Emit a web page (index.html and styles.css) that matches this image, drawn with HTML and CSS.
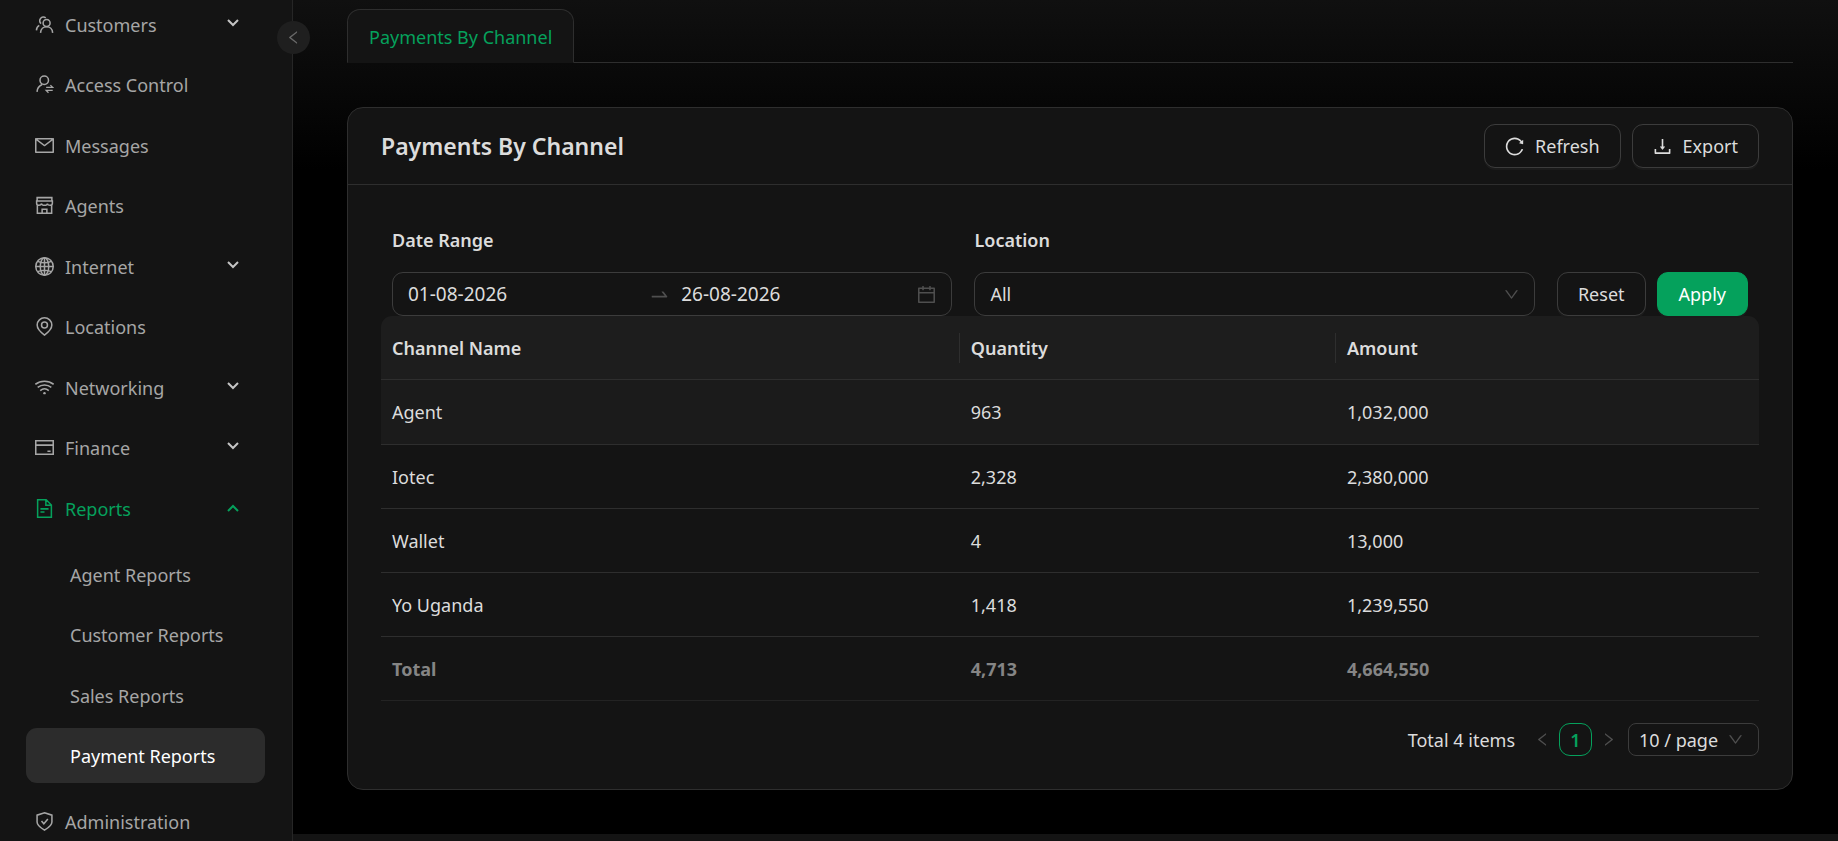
FILE: index.html
```html
<!DOCTYPE html>
<html lang="en">
<head>
<meta charset="utf-8">
<title>Payments By Channel</title>
<link rel="stylesheet" href="styles.css">
</head>
<body>
<svg class="sprite" aria-hidden="true">
  <symbol id="down" viewBox="64 64 896 896"><path d="M884 256h-75c-5.1 0-9.9 2.5-12.9 6.6L512 654.2 227.900 262.600c-3-4.100-7.800-6.600-12.900-6.600h-75c-6.500 0-10.300 7.400-6.500 12.700l352.600 486.100c12.800 17.600 39 17.600 51.700 0l352.600-486.100c3.900-5.300.1-12.700-6.400-12.700z"/></symbol>
  <symbol id="left" viewBox="64 64 896 896"><path d="M724 218.300V141c0-6.700-7.700-10.400-12.900-6.300L260.300 486.800a31.860 31.860 0 000 50.300l450.800 352.100c5.300 4.100 12.900.4 12.900-6.300v-77.300c0-4.900-2.300-9.600-6.100-12.600l-360-281 360-281.100c3.800-3 6.100-7.700 6.100-12.600z"/></symbol>
  <symbol id="right" viewBox="64 64 896 896"><path d="M765.700 486.800L314.900 134.700A7.970 7.970 0 00302 141v77.300c0 4.900 2.300 9.600 6.100 12.600l360 281.100-360 281.100c-3.900 3-6.100 7.700-6.100 12.600V883c0 6.700 7.700 10.400 12.900 6.300l450.800-352.100a31.960 31.960 0 000-50.400z"/></symbol>
  <symbol id="chev" viewBox="0 0 14 14"><path class="line-bold" d="M2 2l5 5 5-5"/></symbol>
  <symbol id="chev-up" viewBox="0 0 14 14"><path class="line-bold" d="M2 9l5-5 5 5"/></symbol>
</svg>
<div class="layout">
  <aside class="sidebar">
    <nav class="menu-clip" aria-label="Main">
      <ul class="menu">
        <li><button class="item" type="button"><svg class="icon" viewBox="64 64 896 896"><g class="line"><circle cx="611" cy="440" r="165"/><path d="M325 905C335 730 460 620 611 620S887 730 897 905M350 470A165 165 0 1 1 570 200M131 790C135 690 175 600 265 550"/></g></svg><span class="text">Customers</span><svg class="chev"><use href="#chev"/></svg></button></li>
        <li><a class="item" href="#"><svg class="icon" viewBox="64 64 896 896"><g class="line"><circle cx="500" cy="310" r="200"/><path d="M160 860C165 690 250 580 400 510"/></g><g class="line-thin"><path d="M590 650H900L790 540M900 790H590L700 900"/></g></svg><span class="text">Access Control</span></a></li>
        <li><a class="item" href="#"><svg class="icon" viewBox="64 64 896 896"><path d="M928 160H96c-17.700 0-32 14.300-32 32v640c0 17.700 14.300 32 32 32h832c17.700 0 32-14.300 32-32V192c0-17.700-14.300-32-32-32zm-40 110.800V792H136V270.800l-27.600-21.500 39.300-50.500 42.800 33.300h643.100l42.800-33.300 39.300 50.500-27.700 21.500zM833.600 232L512 482 190.400 232l-42.800-33.300-39.300 50.500 27.600 21.500 341.600 265.600a55.990 55.990 0 0068.700 0L888 270.800l27.600-21.500-39.300-50.500-42.700 33.200z"/></svg><span class="text">Messages</span></a></li>
        <li><a class="item" href="#"><svg class="icon" viewBox="64 64 896 896"><g class="line"><path d="M165 140H859V300H165ZM140 300H884V400C884 470 830 505 775 505S660 470 650 420C640 470 580 505 512 505S385 470 374 420C360 470 305 505 249 505S140 470 140 400ZM175 500V878H849V500M400 878V690H624V878"/></g></svg><span class="text">Agents</span></a></li>
        <li><button class="item" type="button"><svg class="icon" viewBox="64 64 896 896"><g class="line"><circle cx="512" cy="512" r="412"/><ellipse cx="512" cy="512" rx="200" ry="412"/><path d="M512 100V924M100 512H924M190 270Q512 410 834 270M190 754Q512 614 834 754"/></g></svg><span class="text">Internet</span><svg class="chev"><use href="#chev"/></svg></button></li>
        <li><a class="item" href="#"><svg class="icon" viewBox="64 64 896 896"><g class="line"><path d="M512 915C400 835 166 650 166 445C166 250 330 104 512 104S858 250 858 445C858 650 624 835 512 915Z"/><circle cx="512" cy="442" r="140"/></g></svg><span class="text">Locations</span></a></li>
        <li><button class="item" type="button"><svg class="icon" viewBox="64 64 896 896"><g class="line"><path d="M80 360C330 165 694 165 944 360M190 510C380 360 644 360 834 510M310 655C430 560 594 560 714 655"/></g><circle cx="512" cy="778" r="58"/></svg><span class="text">Networking</span><svg class="chev"><use href="#chev"/></svg></button></li>
        <li><button class="item" type="button"><svg class="icon" viewBox="64 64 896 896"><g class="line"><path d="M100 196H924V828H100ZM100 400H924M650 684H800"/></g></svg><span class="text">Finance</span><svg class="chev"><use href="#chev"/></svg></button></li>
        <li>
          <button class="item open" type="button" aria-expanded="true"><svg class="icon" viewBox="64 64 896 896"><g class="line"><path d="M188 100H590L836 346V924H188ZM576 110V360H826M320 530H704M320 675H512"/></g></svg><span class="text">Reports</span><svg class="chev"><use href="#chev-up"/></svg></button>
          <ul class="submenu">
            <li><a class="item" href="#">Agent Reports</a></li>
            <li><a class="item" href="#">Customer Reports</a></li>
            <li><a class="item" href="#">Sales Reports</a></li>
            <li><a class="item selected" href="#" aria-current="page">Payment Reports</a></li>
          </ul>
        </li>
        <li><a class="item" href="#"><svg class="icon" viewBox="64 64 896 896"><g class="line"><path d="M512 104L862 214V540C862 690 650 840 512 920C374 840 162 690 162 540V214Z"/><path d="M370 490L480 620L670 390"/></g></svg><span class="text">Administration</span></a></li>
      </ul>
    </nav>
    <button class="collapse" type="button" aria-label="Collapse menu"><svg class="icon-sm"><use href="#left"/></svg></button>
  </aside>

  <div class="page">
    <main class="content">
      <div class="tabs" role="tablist"><button class="tab" type="button" role="tab" aria-selected="true">Payments By Channel</button></div>
      <section class="card">
        <header class="card-head">
          <h1 class="title">Payments By Channel</h1>
          <button class="btn" type="button"><svg class="icon" viewBox="64 64 896 896"><path d="M909.100 209.300l-56.400 44.100C775.800 155.100 656.200 92 521.900 92 290 92 102.300 279.500 102 511.500 101.700 743.700 289.800 932 521.900 932c181.300 0 335.800-115 394.600-276.100 1.500-4.200-.7-8.900-4.900-10.300l-56.700-19.500a8 8 0 00-10.100 4.800c-1.800 5-3.800 10-5.900 14.900-17.300 41-42.100 77.800-73.700 109.400A344.770 344.770 0 01655.900 829c-42.300 17.900-87.400 27-133.800 27-46.500 0-91.500-9.100-133.800-27A341.500 341.500 0 01279 755.200a342.160 342.160 0 01-73.700-109.400c-17.900-42.400-27-87.400-27-133.900s9.100-91.500 27-133.900c17.300-41 42.100-77.800 73.700-109.400 31.600-31.600 68.400-56.400 109.300-73.800 42.300-17.900 87.400-27 133.800-27 46.500 0 91.500 9.100 133.800 27a341.500 341.500 0 01109.300 73.800c9.900 9.900 19.200 20.400 27.800 31.400l-60.200 47a8 8 0 003 14.100l175.600 43c5 1.200 9.900-2.600 9.900-7.700l.8-180.900c-.1-6.600-7.800-10.300-13-6.200z"/></svg>Refresh</button>
          <button class="btn" type="button"><svg class="icon" viewBox="64 64 896 896"><path d="M505.700 661a8 8 0 0012.600 0l112-141.700c4.100-5.200.4-12.900-6.300-12.900h-74.100V168c0-4.400-3.600-8-8-8h-60c-4.400 0-8 3.600-8 8v338.300H400c-6.700 0-10.400 7.700-6.300 12.900l112 141.800zM878 626h-60c-4.400 0-8 3.600-8 8v154H214V634c0-4.400-3.600-8-8-8h-60c-4.400 0-8 3.600-8 8v198c0 17.700 14.300 32 32 32h684c17.700 0 32-14.300 32-32V634c0-4.400-3.600-8-8-8z"/></svg>Export</button>
        </header>
        <div class="card-body">
          <form class="filters">
            <div class="field">
              <label class="label" for="from">Date Range</label>
              <div class="control range">
                <input class="date" id="from" type="text" value="01-08-2026">
                <svg class="icon arrow dim" viewBox="64 64 896 896"><path d="M873.100 596.200l-164-208A32 32 0 00684 376h-64.800c-6.700 0-10.400 7.700-6.300 13l144.300 183H152c-4.400 0-8 3.600-8 8v60c0 4.400 3.600 8 8 8h695.900c26.800 0 41.700-30.800 25.200-51.800z"/></svg>
                <input class="date" type="text" value="26-08-2026" aria-label="End date">
                <svg class="icon dim" viewBox="64 64 896 896"><path d="M880 184H712v-64c0-4.400-3.600-8-8-8h-56c-4.400 0-8 3.600-8 8v64H384v-64c0-4.400-3.600-8-8-8h-56c-4.400 0-8 3.600-8 8v64H144c-17.700 0-32 14.300-32 32v664c0 17.700 14.300 32 32 32h736c17.700 0 32-14.300 32-32V216c0-17.700-14.300-32-32-32zm-40 656H184V460h656v380zM184 392V256h128v48c0 4.400 3.600 8 8 8h56c4.400 0 8-3.600 8-8v-48h256v48c0 4.400 3.600 8 8 8h56c4.400 0 8-3.600 8-8v-48h128v136H184z"/></svg>
              </div>
            </div>
            <div class="field">
              <label class="label" for="location">Location</label>
              <div class="pick">
                <select class="control select" id="location"><option>All</option></select>
                <svg class="icon-sm dim"><use href="#down"/></svg>
              </div>
            </div>
            <div class="actions">
              <button class="btn" type="reset">Reset</button>
              <button class="btn primary" type="button">Apply</button>
            </div>
          </form>
          <table class="table">
            <colgroup><col class="col-name"><col class="col-qty"><col></colgroup>
            <thead><tr><th><div class="th">Channel Name</div></th><th><div class="th">Quantity</div></th><th><div class="th">Amount</div></th></tr></thead>
            <tbody>
              <tr class="hover"><td>Agent</td><td>963</td><td>1,032,000</td></tr>
              <tr><td>Iotec</td><td>2,328</td><td>2,380,000</td></tr>
              <tr><td>Wallet</td><td>4</td><td>13,000</td></tr>
              <tr><td>Yo Uganda</td><td>1,418</td><td>1,239,550</td></tr>
            </tbody>
            <tfoot><tr><td>Total</td><td>4,713</td><td>4,664,550</td></tr></tfoot>
          </table>
          <div class="pager">
            <span class="count">Total 4 items</span>
            <button class="page-btn dim" type="button" aria-label="Previous page"><svg class="icon-sm"><use href="#left"/></svg></button>
            <button class="page-btn current" type="button">1</button>
            <button class="page-btn dim" type="button" aria-label="Next page"><svg class="icon-sm"><use href="#right"/></svg></button>
            <div class="pick size">
              <select class="control select" aria-label="Page size"><option>10 / page</option></select>
              <svg class="icon-sm dim"><use href="#down"/></svg>
            </div>
          </div>
        </div>
      </section>
    </main>
    <footer class="footer"></footer>
  </div>
</div>
</body>
</html>
```
FILE: styles.css
```css
* { box-sizing: border-box; }
body {
  margin: 0;
  background: #000;
  color: #dcdcdc;
  font: 18px/28px "Noto Sans", "Open Sans", sans-serif;
  overflow: hidden;
}
button, input, select { font: inherit; color: inherit; }
button { cursor: pointer; }
svg { display: block; flex: none; fill: currentColor; }
ul { list-style: none; margin: 0; padding: 0; }
.sprite { position: absolute; width: 0; height: 0; }
.line { fill: none; stroke: currentColor; stroke-width: 72; }
.line-thin { fill: none; stroke: currentColor; stroke-width: 60; }
.line-bold { fill: none; stroke: currentColor; stroke-width: 2; }
.icon { width: 19px; height: 19px; }
.icon-sm { width: 15px; height: 15px; }
.dim { color: #4f4f4f; }

.layout { display: flex; height: 100vh; }

/* Sidebar */
.sidebar {
  position: relative;
  flex: none;
  width: 293px;
  background: #141414;
  border-right: 1px solid #262626;
}
.menu-clip { height: 100%; overflow: hidden; padding: 0 27px 0 26px; }
.menu { margin-top: -3px; }
.menu > li, .submenu > li { margin-bottom: 5px; }
.menu > li:nth-child(even), .submenu > li:nth-child(even) { margin-bottom: 6px; }
.submenu > li:last-child { margin-bottom: 11px; }
.item {
  display: flex;
  align-items: center;
  gap: 11px;
  width: 100%;
  height: 55px;
  padding: 0 25px 0 9px;
  border: 0;
  border-radius: 11px;
  background: none;
  color: #a6a6a6;
  text-align: left;
  text-decoration: none;
}
.text { flex: 1; }
.chev { width: 14px; height: 14px; color: #c4c4c4; }
.item.open, .item.open .chev { color: #05a15c; }
.submenu { padding-top: 11px; }
.submenu .item { padding-left: 44px; }
.item.selected { background: #2c2c2c; color: #fff; }
.collapse {
  position: absolute;
  top: 21px;
  right: -18px;
  display: grid;
  place-items: center;
  width: 33px;
  height: 33px;
  padding: 0;
  border: 0;
  border-radius: 50%;
  background: #1f1f1f;
  color: #696969;
}

/* Page */
.page {
  flex: 1;
  min-width: 0;
  display: flex;
  flex-direction: column;
  background: linear-gradient(#101010, #000 170px);
}
.content { padding: 9px 45px 44px 54px; }
.footer { flex: 1; background: #141414; }
.tabs { display: flex; margin-bottom: 44px; box-shadow: inset 0 -1px #2e2e2e; }
.tab {
  height: 54px;
  padding: 2px 21px 0;
  border: 1px solid #2e2e2e;
  border-bottom-color: #141414;
  border-radius: 13px 13px 0 0;
  background: #141414;
  color: #05a15c;
}

/* Card */
.card { border: 1px solid #2e2e2e; border-radius: 16px; background: #141414; }
.card-head {
  display: flex;
  align-items: center;
  gap: 11px;
  height: 77px;
  padding: 0 33px;
  border-bottom: 1px solid #2e2e2e;
}
.title { flex: 1; margin: 0; font-size: 23px; line-height: 32px; font-weight: 600; }
.card-body { padding: 40px 33px 33px; }
.btn {
  display: flex;
  align-items: center;
  gap: 11px;
  height: 44px;
  padding: 0 20px;
  border: 1px solid #3c3c3c;
  border-radius: 11px;
  background: #141414;
  box-shadow: 0 2px 0 #1b1b1b;
}
.btn.primary { padding: 0 21px; border-color: #05a15c; background: #05a15c; color: #fff; }

/* Filters */
.filters { display: flex; align-items: flex-end; gap: 22px; padding: 0 11px; }
.field { flex: 1; min-width: 0; }
.label { display: block; margin-bottom: 17px; line-height: 30px; font-weight: 600; }
.control {
  width: 100%;
  height: 44px;
  border: 1px solid #3c3c3c;
  border-radius: 11px;
  background: #141414;
}
.range { display: flex; align-items: center; gap: 6px; padding: 0 15px; }
.date { flex: 1; width: 0; min-width: 0; padding: 0; border: 0; outline: 0; background: none; font-size: 19px; }
.arrow { margin: 0 6px; }
.pick { display: grid; align-items: center; }
.pick > * { grid-area: 1 / 1; }
.pick > svg { justify-self: end; margin-right: 16px; pointer-events: none; }
.select { appearance: none; padding: 0 15px; }
.actions { display: flex; gap: 11px; }

/* Table */
.table { width: 100%; border-collapse: separate; border-spacing: 0; table-layout: fixed; }
.col-name { width: 42%; }
.col-qty { width: 27.3%; }
.table th, .table td {
  height: 64px;
  padding: 0 11px;
  border-bottom: 1px solid #2e2e2e;
  text-align: left;
}
.table th { padding-right: 0; background: #1d1d1d; font-weight: 600; }
.table th:first-child { border-top-left-radius: 11px; }
.table th:last-child { border-top-right-radius: 11px; }
.th { line-height: 30px; border-right: 1px solid #2e2e2e; }
.table th:last-child .th { border-right: 0; }
.table .hover td { height: 65px; background: #1b1b1b; }
.table tfoot td { border-bottom-color: #232323; color: #858585; font-weight: 700; }

/* Pagination */
.pager { display: flex; align-items: center; justify-content: flex-end; padding-top: 22px; }
.count { margin-right: 11px; }
.page-btn {
  display: grid;
  place-items: center;
  width: 33px;
  height: 33px;
  padding: 0;
  border: 0;
  border-radius: 11px;
  background: none;
}
.page-btn.current { border: 1px solid #05a15c; color: #05a15c; font-weight: 600; }
.size { width: 131px; margin-left: 3px; }
.size .select { height: 33px; padding: 0 10px; border-radius: 8px; }
```
